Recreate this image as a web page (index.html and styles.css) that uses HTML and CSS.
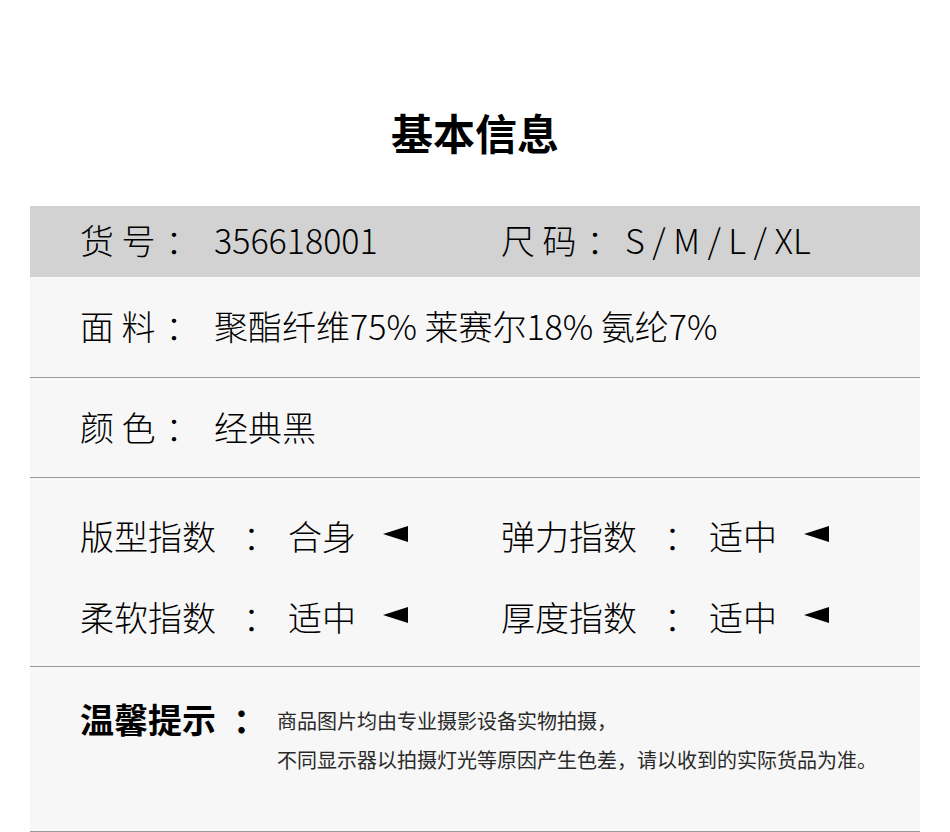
FILE: index.html
```html
<!DOCTYPE html>
<html lang="zh-CN">
<head>
<meta charset="utf-8">
<title>基本信息</title>
<link rel="stylesheet" href="styles.css">
</head>
<body>
<div class="page">
  <h1 class="title">基本信息</h1>
  <div class="table">
    <div class="row row-head">
      <div class="cell cell-left">
        <span class="label">货 号<span class="colon">：</span></span><span class="value">356618001</span>
      </div>
      <div class="cell cell-right">
        <span class="label label-r">尺 码<span class="colon">：</span></span><span class="value">S / M / L / XL</span>
      </div>
    </div>
    <div class="row row-a">
      <div class="cell">
        <span class="label">面 料<span class="colon">：</span></span><span class="value">聚酯纤维75% 莱赛尔18% 氨纶7%</span>
      </div>
    </div>
    <div class="row row-b">
      <div class="cell">
        <span class="label">颜 色<span class="colon">：</span></span><span class="value">经典黑</span>
      </div>
    </div>
    <div class="row row-idx">
      <div class="idx-grid">
        <div class="idx"><span class="idx-name">版型指数</span><span class="idx-colon">：</span><span class="idx-val">合身</span><span class="tri"></span></div>
        <div class="idx"><span class="idx-name">弹力指数</span><span class="idx-colon">：</span><span class="idx-val">适中</span><span class="tri"></span></div>
        <div class="idx"><span class="idx-name">柔软指数</span><span class="idx-colon">：</span><span class="idx-val">适中</span><span class="tri"></span></div>
        <div class="idx"><span class="idx-name">厚度指数</span><span class="idx-colon">：</span><span class="idx-val">适中</span><span class="tri"></span></div>
      </div>
    </div>
    <div class="row row-tip">
      <div class="tip">
        <span class="tip-label">温馨提示</span><span class="tip-colon">：</span>
        <div class="tip-text">
          <p>商品图片均由专业摄影设备实物拍摄，</p>
          <p>不同显示器以拍摄灯光等原因产生色差，请以收到的实际货品为准。</p>
        </div>
      </div>
    </div>
  </div>
</div>
</body>
</html>
```
FILE: styles.css
```css
html, body {
  margin: 0;
  padding: 0;
  background: #ffffff;
}
body {
  font-family: "Noto Sans CJK SC", "Noto Sans", sans-serif;
  color: #000;
}
.page {
  width: 950px;
  height: 832px;
  overflow: hidden;
}
.title {
  margin: 0 0 42px 0;
  padding-top: 100px;
  line-height: 64px;
  font-size: 42px;
  font-weight: 700;
  text-align: center;
}
.table {
  margin: 0 30px;
  width: 890px;
  background: #f7f7f7;
}
.row {
  display: flex;
  align-items: center;
  box-sizing: border-box;
  padding-left: 50px;
  border-bottom: 1px solid #9a9a9a;
  font-size: 34px;
  font-weight: 300;
  line-height: 40px;
}
.row-head {
  height: 71px;
  padding-bottom: 4px;
  background: #d2d2d2;
  border-bottom: none;
}
.row-a { height: 101px; padding-bottom: 2px; }
.row-b { height: 100px; padding-bottom: 1px; }
.row-idx { height: 189px; padding-top: 8px; }
.row-tip {
  height: 165px;
  align-items: flex-start;
}
.cell {
  display: flex;
  align-items: center;
}
.cell-left { width: 421px; }
.label {
  display: inline-block;
  width: 134px;
  white-space: pre;
}
.label .colon {
  padding-left: 10px;
}
.label-r { width: 124px; }
.value { white-space: pre; }

.idx-grid {
  display: grid;
  grid-template-columns: 421px 360px;
  row-gap: 41px;
}
.idx {
  display: flex;
  align-items: center;
}
.idx-name { width: 154px; }
.idx-colon {
  box-sizing: border-box;
  width: 54px;
  padding-left: 9px;
}
.idx-val { width: 95px; }
.tri {
  width: 0;
  height: 0;
  border-top: 8px solid transparent;
  border-bottom: 8px solid transparent;
  border-right: 25px solid #000;
  margin-top: -4px;
}

.tip {
  display: flex;
  align-items: flex-start;
  padding-top: 32px;
}
.tip-label {
  font-size: 34px;
  font-weight: 700;
  line-height: 40px;
}
.tip-colon {
  font-size: 34px;
  font-weight: 700;
  line-height: 40px;
  margin-left: 17px;
  width: 44px;
}
.tip-text {
  font-size: 20px;
  font-weight: 400;
  line-height: 39px;
  color: #2a2a2a;
  padding-top: 2px;
}
.tip-text p { margin: 0; }
```
